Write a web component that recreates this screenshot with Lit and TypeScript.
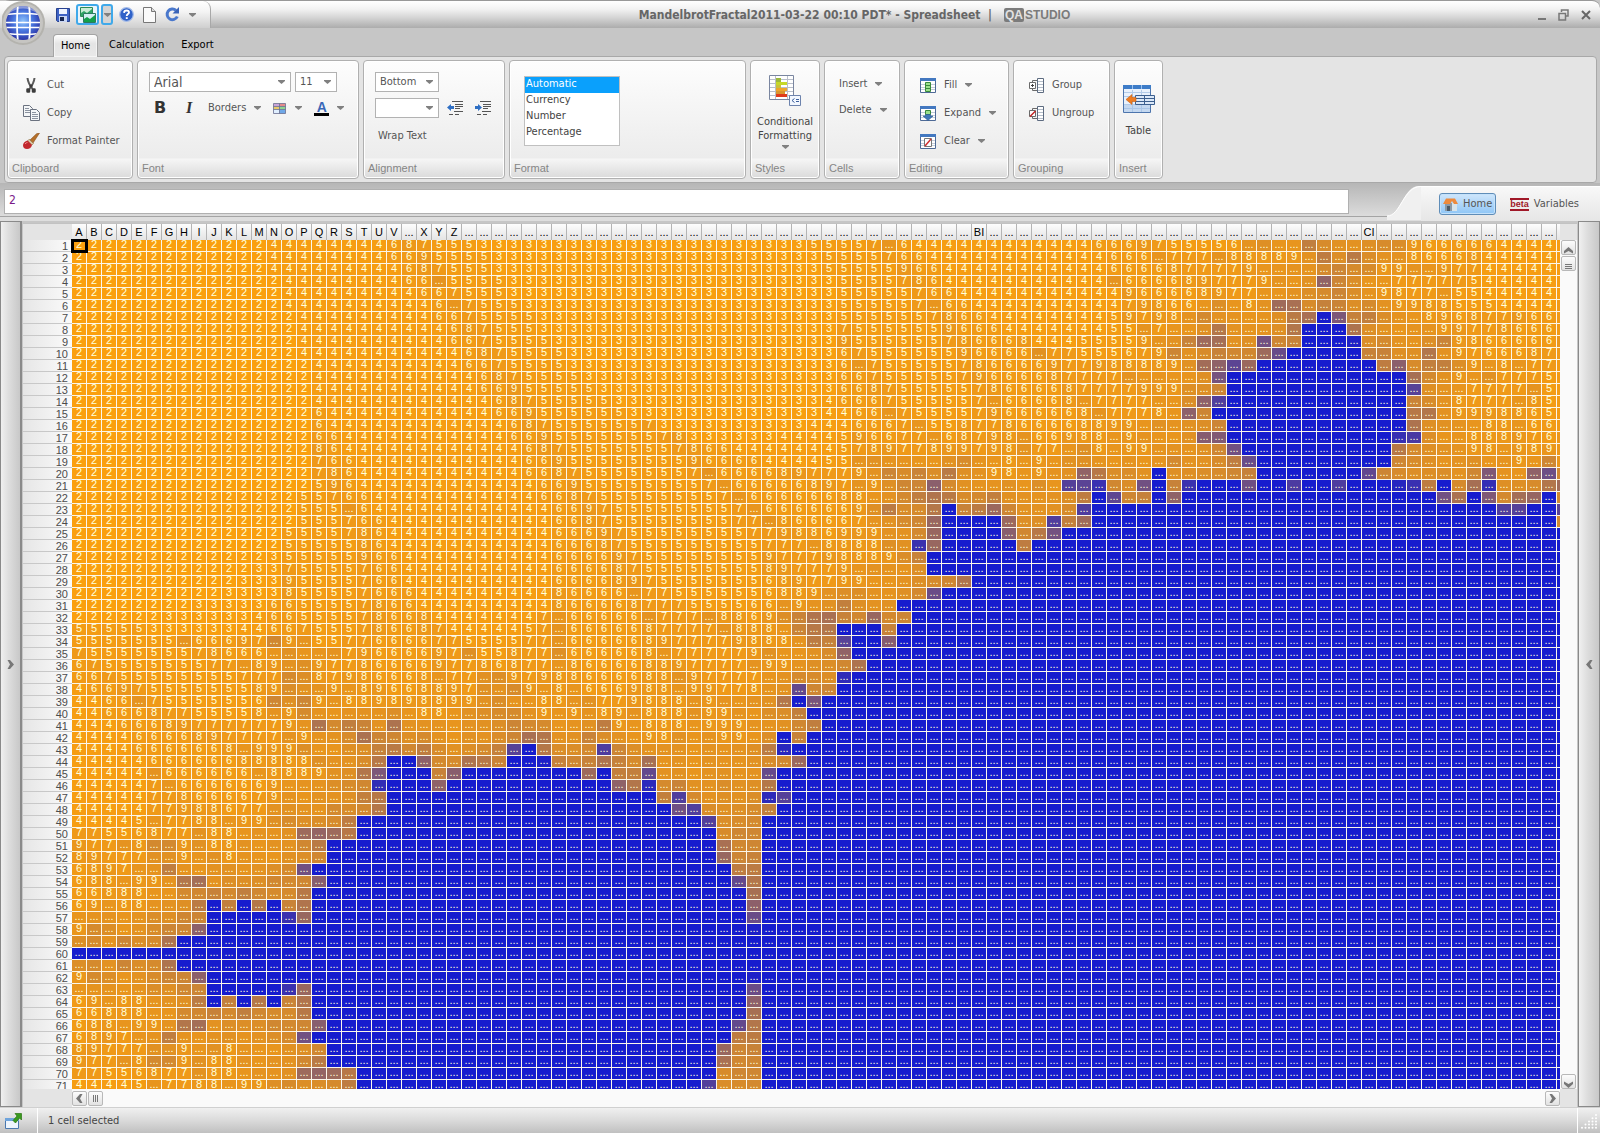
import { LitElement, html, svg, css, nothing, TemplateResult } from "lit";
import { customElement, property } from "lit/decorators.js";
import { styleMap } from "lit/directives/style-map.js";
import { classMap } from "lit/directives/class-map.js";

const COLUMNS = 100;
const ROWS = 71;
const MAX_STEPS = 100;
const STEP = 1 / 60;

/** Number of steps before the orbit of x + iy leaves the hyperbola x² - y² = 4. */
function escapeSteps(cx: number, cy: number): number {
  let x = cx;
  let y = cy;
  for (let n = 0; n < MAX_STEPS; n++) {
    const xx = x * x;
    const yy = y * y;
    if (!(xx - yy <= 4)) return n;
    y = 2 * x * y + cy;
    x = xx - yy + cx;
  }
  return MAX_STEPS;
}

const FEW: number[] = [255, 162, 10];
const MANY: number[] = [22, 28, 206];

function heat(n: number): string {
  const t = n / MAX_STEPS;
  return `rgb(${FEW.map((v, i) => Math.round(v + (MANY[i] - v) * t)).join(",")})`;
}

function columnName(i: number): string {
  const letter = String.fromCharCode(65 + (i % 26));
  return i < 26 ? letter : columnName(Math.floor(i / 26) - 1) + letter;
}

function columnLabel(i: number): string {
  const name = columnName(i);
  if (i === COLUMNS - 1) return "";
  if (name === "BI" || name === "CI") return name;
  return name.length === 1 && name !== "W" ? name : "...";
}

function cellText(n: number, column: number): string {
  if (column === COLUMNS - 1) return "";
  return n < 10 ? String(n) : "...";
}

const icon = (w: number, h: number, body: unknown) =>
  html`<svg width=${w} height=${h} viewBox="0 0 ${w} ${h}" aria-hidden="true">${body}</svg>`;

const caret = icon(7, 4, svg`<path d="M0 0h7v1L3.5 4 0 1z" fill="#808080"/>`);

const icons = {
  orb: icon(44, 46, svg`
    <defs>
      <radialGradient id="ball" cx=".5" cy=".45" r=".55">
        <stop offset="0" stop-color="#8fc4fb"/><stop offset=".5" stop-color="#4a78e0"/><stop offset="1" stop-color="#2c36a8"/>
      </radialGradient>
      <clipPath id="ballclip"><circle cx="21" cy="23" r="17"/></clipPath>
    </defs>
    <circle cx="21" cy="23" r="22" fill="#b4b3ae"/>
    <circle cx="21" cy="23" r="20" fill="#c6c5c2"/>
    <circle cx="21" cy="23" r="17" fill="url(#ball)"/>
    <g clip-path="url(#ballclip)" fill="none" stroke="#fff">
      <path d="M16 4q-2 19 0 38M27 4q2 19 0 38" stroke-width="1.8"/>
      <path d="M3 14.500q18-2 36 0M3 22.500h36M3 27.500h36M3 33.500q18 2 36 0" stroke-width="1.500"/>
      <path d="M6 12q15-10 30 0" stroke="#ffffff66" stroke-width="3"/>
    </g>`),
  save: icon(14, 14, svg`
    <path d="M.5 .5h13v13h-12l-1-1z" fill="#3e62c4" stroke="#27418f"/>
    <path d="M3 1h8v5H3z" fill="#eef3ff"/><path d="M3 8h8v6H3z" fill="#c9d6f4"/><path d="M4 9h4v4H4z" fill="#15244f"/>`),
  pictures: icon(16, 16, svg`
    <path d="M.5 .5h12v9H.5z" fill="#c9ecd6" stroke="#2c8a55"/><path d="M1 9V6l3-2 3 2 5-4v7z" fill="#2ea565"/>
    <path d="M3.500 6.500h12v9h-12z" fill="#d3eef3" stroke="#2c7a60"/><path d="M4 15v-3l3-2 3 2 5-4v7z" fill="#12a04a"/>`),
  help: icon(15, 15, svg`
    <circle cx="7.500" cy="7.500" r="6.800" fill="#2f62c8" stroke="#a5bce8" stroke-width="1.200"/>
    <path d="M5 5.800Q5.200 3.500 7.600 3.500T10 5.500C10 7 7.700 7.200 7.700 9" fill="none" stroke="#fff" stroke-width="1.800"/><path d="M6.800 10.200h1.900V12H6.800z" fill="#fff"/>`),
  page: icon(13, 16, svg`<path d="M.5 .5h8l4 4v11H.5z" fill="#fafafa" stroke="#777"/><path d="M8.500 .5v4h4" fill="#ddd" stroke="#777"/>`),
  refresh: icon(15, 15, svg`
    <path d="M12.300 9.500A5.300 5.300 0 1 1 11 3.400" fill="none" stroke="#4a78cc" stroke-width="3"/><path d="M14 0v6.500H7.500z" fill="#3a64b8"/>`),
  cut: icon(12, 17, svg`
    <path d="M2.500 1Q3 6 7.500 12M9.500 1Q9 6 4.500 12" fill="none" stroke="#5a5a5a" stroke-width="2"/><path d="M4.500 9h3" stroke="#3c3c3c" stroke-width="3"/>
    <path d="M2.500 12.500h1.500v2H2.500zM8 12.500h1.500v2H8z" fill="none" stroke="#3c3c3c" stroke-width="2.500" stroke-linejoin="round"/>`),
  copy: icon(17, 16, svg`
    <path d="M.5 .5h6l3 3v8h-9z" fill="#f4f6f8" stroke="#6b7280"/><path d="M2 3.500h4M2 5.500h5M2 7.500h5" stroke="#8b93a0"/>
    <path d="M7.500 4.500h6l3 3v8h-9z" fill="#f4f6f8" stroke="#6b7280"/><path d="M9 7.500h4M9 9.500h6M9 11.500h6M9 13.500h6" stroke="#8b93a0"/>`),
  brush: icon(17, 16, svg`
    <path d="M16.500 0 13.500 .8 7 7l3 3z" fill="#b5702a" stroke="#8a4f1c" stroke-width=".6"/>
    <path d="M6.200 6.200 10.500 10.500 9 12 4.700 7.800z" fill="#d9c7a4" stroke="#8b6b3f" stroke-width=".6"/>
    <path d="M4.500 7.500 9 12Q8 16 4 16T0 12Q.500 8.500 4.500 7.500z" fill="#c2282e"/><path d="M2 11q1-1.500 2.500-1.500" stroke="#f08a8a" fill="none"/>`),
  colors: icon(13, 11, svg`
    <path d="M.5 .5h6v3h-6z" fill="#c9a4d8"/><path d="M6.500 .5h6v3h-6z" fill="#e58a8a"/><path d="M.5 3.500h6v3h-6z" fill="#e8c96a"/>
    <path d="M6.500 3.500h6v3h-6z" fill="#8fd48f"/><path d="M.5 6.500h6v4h-6z" fill="#e0efff"/><path d="M6.500 6.500h6v4h-6z" fill="#6fa8e8"/>
    <path d="M.5 .5h12v10H.5zM6.500 .5v10M.5 3.500h12M.5 6.500h12" fill="none" stroke="#6a6f90" stroke-opacity=".8"/>`),
  outdent: icon(16, 14, svg`
    <path d="M5 .5h11M8 3.500h8M8 5.500h8M8 7.500h5M7 10.500h9" stroke="#555"/><path d="M2 13.500h4M8 13.500h4" stroke="#555"/><path d="M0 6.500 4 3v2h3v3H4v2z" fill="#2f6fc4"/>`),
  indent: icon(16, 14, svg`
    <path d="M5 .5h11M8 3.500h8M8 5.500h8M8 7.500h5M7 10.500h9" stroke="#555"/><path d="M2 13.500h4M8 13.500h4" stroke="#555"/><path d="M7 6.500 3 3v2H0v3h3v2z" fill="#2f6fc4"/>`),
  conditional: icon(33, 32, svg`
    <path d="M.5 .5h24v24H.5z" fill="#fff" stroke="#7a86a0"/>
    <path d="M1 4.500h23M1 8.500h23M1 12.500h23M1 16.500h23M1 20.500h23M6.500 1v23M18.500 1v23" stroke="#b9bfca"/>
    <path d="M7 3h5v4H7z" fill="#9cb83c"/><path d="M7 7h11v3H7z" fill="#c6d829"/><path d="M7 10h5v3H7z" fill="#c8c23c"/>
    <path d="M7 13h11v3H7z" fill="#eea52c"/><path d="M7 16h9v3H7z" fill="#d9962f"/><path d="M7 19h11v3H7z" fill="#e03c1c"/>
    <path d="M20.500 20.500h11v10h-11z" fill="#f2f7ff" stroke="#6d83ad"/>
    <path d="M25.500 23.500 23 25.500l2.500 2M27 24.500h3M27 26.500h3" fill="none" stroke="#3c5f9c"/>`),
  fill: icon(16, 15, svg`
    <path d="M.5 .5h15v14H.5z" fill="#fff" stroke="#4e6a96"/><path d="M0 0h16v3H0z" fill="#4378c0"/><path d="M1 6.500h14M1 9.500h14M1 11.500h14" stroke="#c3ccd8"/>
    <path d="M5.500 4.500h5v9h-5z" fill="#9be08c" stroke="#3a8a3c"/><path d="M6 7.500h4M6 10.500h4" stroke="#3a8a3c"/>`),
  expand: icon(16, 15, svg`
    <path d="M.5 .5h15v14H.5z" fill="#fff" stroke="#4e6a96"/><path d="M0 0h16v3H0z" fill="#4378c0"/><path d="M1 6.500h14M1 9.500h14M1 11.500h14" stroke="#c3ccd8"/>
    <path d="M5.500 4.500h5v4h-5z" fill="#9be08c" stroke="#3a8a3c"/><path d="M5.500 8.500h5v1.500h2.500l-5 4.500-5-4.500h2.500z" fill="#3f78b8" stroke="#2d5b90" stroke-width=".6"/>`),
  clear: icon(16, 15, svg`
    <path d="M.5 .5h15v14H.5z" fill="#fff" stroke="#4e6a96"/><path d="M0 0h16v3H0z" fill="#4378c0"/><path d="M1 6.500h14M1 9.500h14M1 11.500h14" stroke="#c3ccd8"/>
    <path d="M4.500 4.500h7v8h-7z" fill="#fff" stroke="#777"/><path d="M5 12 11 5" stroke="#d03030" stroke-width="1.500"/>`),
  group: icon(15, 15, svg`
    <path d="M8.500 .5h6v14h-6z" fill="#fff" stroke="#5d6b80"/><path d="M9 3.500h5M9 6.500h5M9 9.500h5M9 12.500h5" stroke="#b4bdc9"/>
    <path d="M8 2.500H3.500v10H8" fill="none" stroke="#6a6a6a"/><path d="M.5 4.500h6v6h-6z" fill="#fff" stroke="#6a6a6a"/><path d="M2 7.500h3M3.500 6v3" stroke="#444"/>`),
  ungroup: icon(15, 15, svg`
    <path d="M8.500 .5h6v14h-6z" fill="#fff" stroke="#5d6b80"/><path d="M9 3.500h5M9 6.500h5M9 9.500h5M9 12.500h5" stroke="#b4bdc9"/>
    <path d="M8 2.500H3.500v10H8" fill="none" stroke="#6a6a6a"/><path d="M.5 4.500h6v6h-6z" fill="#fff" stroke="#6a6a6a"/><path d="M1 10.500 6.500 5" stroke="#c02020" stroke-width="1.500"/>`),
  table: icon(32, 29, svg`
    <path d="M.5 .5h27v27H.5z" fill="#e9f1fb" stroke="#4d75ad"/><path d="M0 0h28v4H0z" fill="#3d7cc8"/><path d="M9.500 0v4M18.500 0v4" stroke="#9cc2ef"/>
    <path d="M1 7.500h26M1 11.500h26M1 19.500h26M1 23.500h26M9.500 5v22M18.500 5v22" stroke="#b3cbe8"/><path d="M1 20h26v7H1z" fill="#9fbfe6" fill-opacity=".5"/>
    <path d="M12.500 10.500h19v9h-19z" fill="#dbe8f8" stroke="#3c5f8e"/><path d="M12.500 13.500h19M12.500 16.500h19M21.500 10.500v9" stroke="#3c5f8e"/>
    <path d="M3 14.500 9 9.500v3h4v4H9v3z" fill="#ee7d22" stroke="#c85f10" stroke-width=".6"/>`),
  home: icon(15, 13, svg`
    <path d="M2 5h8v8H2z" fill="#8b99a6"/><path d="M9 5h5v8H9z" fill="#d8e4ea"/><path d="M4 8h3v5H4z" fill="#4c5a66"/>
    <path d="M0 6 3 .5h9L15 6h-4L9 3 7 6z" fill="#ee8a3c"/>`),
  launch: icon(17, 16, svg`
    <path d="M.5 5.500h13v10H.5z" fill="#eef5fd" stroke="#4a78ae"/><path d="M0 5h14v3H0z" fill="#6fa4dc"/>
    <path d="M10 .5h6.500V7l-2-2-4 5-2.500-2.500 4-4.500z" fill="#3a9a1e" stroke="#2a7412" stroke-width=".7"/>`),
  minimize: icon(8, 2, svg`<path d="M0 0h8v2H0z" fill="#777"/>`),
  restore: icon(11, 12, svg`<path d="M3.500 3V1H10v6H8" fill="none" stroke="#777" stroke-width="1.500"/><path d="M1 4.500h6.500V11H1z" fill="none" stroke="#777" stroke-width="1.500"/>`),
  close: icon(10, 10, svg`<path d="M1 1l8 8M9 1 1 9" stroke="#666" stroke-width="2"/>`),
  left: icon(7, 9, svg`<path d="M6.500 0 4 4.500 6.500 9H4L0 4.500 4 0z" fill="#777"/>`),
  right: icon(7, 9, svg`<path d="M.5 0 3 4.500.5 9H3l4-4.500L3 0z" fill="#777"/>`),
  up: icon(9, 7, svg`<path d="M0 6.500 4.500 4 9 6.500V4L4.500 0 0 4z" fill="#777"/>`),
  down: icon(9, 7, svg`<path d="M0 .5 4.500 3 9 .5V3L4.500 7 0 3z" fill="#777"/>`),
  gripH: icon(7, 7, svg`<path d="M1.500 0v7M3.500 0v7M5.500 0v7" stroke="#777"/>`),
  gripV: icon(7, 7, svg`<path d="M0 1.500h7M0 3.500h7M0 5.500h7" stroke="#777"/>`),
  resize: icon(17, 17, svg`${[0, 1, 2, 3, 4].map((r) =>
    Array.from({ length: r + 1 }, (_, c) => svg`<circle cx=${15 - c * 3.5} cy=${2 + r * 3.2} r="1" fill="#fff"/>`))}`),
};

const controls = css`
  button, select, input { font: inherit; color: inherit; margin: 0; padding: 0; border: 0; background: none; border-radius: 0; }
  button { display: inline-flex; align-items: center; white-space: nowrap; }
  svg { display: block; flex: none; }
`;

@customElement("ribbon-group")
class RibbonGroup extends LitElement {
  @property() label = "";
  static styles = css`
    :host { display: flex; flex-direction: column; box-sizing: border-box; border: 1px solid #b0b0b0; border-radius: 4px;
      background: linear-gradient(#fdfdfd, #ececec 97px, #f6f6f6 98px, #dadada); box-shadow: inset 0 0 0 1px #fff; }
    .content { flex: 1; box-sizing: border-box; }
    .label { height: 20px; line-height: 21px; padding-left: 4px; color: #858585; font-family: "Liberation Sans", sans-serif; }
  `;
  render() {
    return html`<div class="content"><slot></slot></div><div class="label">${this.label}</div>`;
  }
}

@customElement("fractal-sheet")
class FractalSheet extends LitElement {
  static styles = css`
    :host { display: block; overflow: hidden; font: 11px/8px "Liberation Sans", sans-serif; }
    table { border-collapse: separate; border-spacing: 0; table-layout: fixed; width: 1549px; }
    .numbers { width: 49px; }
    th, td { box-sizing: border-box; padding: 0; font-weight: normal; white-space: nowrap; }
    thead th { height: 16px; line-height: 15px; color: #000; text-align: center; border-right: 1px solid #b4b4b4;
      background: linear-gradient(#fdfdfd, #e4e4e4); }
    thead th:first-child { background: #e4e4e4; border-right: 0; }
    tbody th { height: 12px; line-height: 10px; color: #4c4c4c; text-align: right; padding-right: 4px;
      border-bottom: 1px solid #c8c8c8; background: linear-gradient(90deg, #e6e6e6, #fbfbfb); }
    td { height: 12px; text-align: center; vertical-align: top; color: #ffffdc;
      border-right: 1px solid #fbf6ea; border-bottom: 1px solid #fbf6ea; }
    .current { outline: 3px solid #000; outline-offset: -2px; position: relative; }
  `;
  render() {
    const columns = Array.from({ length: COLUMNS }, (_, i) => i);
    const rows = Array.from({ length: ROWS }, (_, i) => i);
    return html`<table aria-label="Mandelbrot cells">
      <colgroup><col class="numbers" /><col span=${COLUMNS} /></colgroup>
      <thead><tr><th></th>${columns.map((c) => html`<th scope="col">${columnLabel(c)}</th>`)}</tr></thead>
      <tbody>${rows.map((r) => html`<tr><th scope="row">${r + 1}</th>${columns.map((c) => {
        const n = escapeSteps(-1.5 + c * STEP, (59 - r) * STEP);
        return html`<td class=${classMap({ current: r === 0 && c === 0 })} style=${styleMap({ background: heat(n) })}>${cellText(n, c)}</td>`;
      })}</tr>`)}</tbody>
    </table>`;
  }
}

@customElement("app-root")
class AppRoot extends LitElement {
  static styles = [controls, css`
    :host { display: flex; flex-direction: column; height: 100vh; overflow: hidden; position: relative; background: #c6c6c6;
      font: 11px/14px "DejaVu Sans Condensed", "DejaVu Sans", sans-serif; color: #555; }
    .titlebar { display: flex; align-items: stretch; height: 28px; box-sizing: border-box; border-top: 1px solid #989898;
      background: linear-gradient(#fff, #f2f2f2 30%, #d6d6d6 60%, #acacac); border-radius: 10px 8px 0 0; }
    .quick { display: flex; align-items: center; width: 154px; padding-left: 56px; gap: 9px; box-sizing: content-box;
      border-right: 1px solid #a8a8a8; border-radius: 0 8px 0 0; background: linear-gradient(#fff, #f4f4f4 40%, #cfcfcf); }
    .split { display: flex; gap: 2px; margin: 0 -3px; }
    .split button { height: 21px; border: 2px solid #3fa9ea; border-radius: 3px; justify-content: center; box-sizing: border-box; background: #eaf4fb; }
    .split button:first-child { width: 23px; }
    .split button:last-child { width: 12px; background: #d4d4d4; }
    .caption { flex: 1; display: flex; align-items: center; justify-content: center; gap: 12px; padding-right: 40px; margin: 0;
      color: #666; font: bold 12px/16px "DejaVu Sans Condensed", "DejaVu Sans", sans-serif; }
    .brand { display: flex; align-items: center; gap: 1px; color: #7b7b7b; font: bold 12px/14px "Liberation Sans", sans-serif; }
    .brand b { background: #7b7b7b; color: #e2e2e2; padding: 0 1px; border-radius: 2px; }
    .window { display: flex; align-items: center; gap: 12px; padding-right: 9px; }
    .window .min { padding-top: 9px; }
    .orb { position: absolute; left: 2px; top: 0; z-index: 2; }
    .tabs { display: flex; align-items: flex-end; height: 28px; padding-left: 53px; gap: 17px; color: #000; }
    .tabs button { height: 23px; }
    .tabs .active { width: 45px; margin: 0 -6px -1px 0; justify-content: center; box-sizing: border-box; border: 1px solid #a4a4a4; border-bottom: 0;
      border-radius: 4px 4px 0 0; background: linear-gradient(#fff, #e4e4e4 40%, #e9e9e9); position: relative; z-index: 1; box-shadow: inset 0 0 0 1px #fff8; }
    .ribbon { display: flex; gap: 4px; height: 127px; box-sizing: border-box; margin: 0 3px 0 4px; padding: 3px 2px; border: 1px solid #a8a8a8;
      border-radius: 4px; background: #e4e4e4; }
    .clipboard { width: 126px; }
    .font { width: 222px; }
    .alignment { width: 142px; }
    .format { width: 237px; }
    .styles { width: 70px; }
    .cells { width: 76px; }
    .editing { width: 105px; }
    .grouping { width: 97px; }
    .insert { width: 49px; }
    .list { display: flex; flex-direction: column; padding: 10px 0 0 14px; }
    .list button { height: 28px; }
    .list .pic { display: flex; justify-content: center; width: 18px; margin-right: 7px; }
    .grouping .list { padding-left: 13px; }
    .drop > svg { margin-left: 8px; }
    .box { position: relative; display: flex; }
    .box select { appearance: none; width: 100%; height: 20px; box-sizing: border-box; padding: 0 4px; border: 1px solid #b2b2b2; background: #fff; }
    .box svg { position: absolute; right: 6px; top: 8px; pointer-events: none; }
    .fontname { width: 142px; font-size: 14px; }
    .fontsize { width: 42px; }
    .valign, .halign { width: 64px; }
    .stack { padding: 11px 10px 0 11px; display: flex; flex-direction: column; gap: 6px; }
    .line { display: flex; align-items: center; gap: 4px; height: 20px; }
    .tools { gap: 0; }
    .bold { width: 22px; margin-right: 7px; justify-content: center; color: #333; font: 900 16px/20px "DejaVu Sans", sans-serif; }
    .italic { width: 22px; margin-right: 8px; justify-content: center; color: #333; font: italic bold 16px/20px "Liberation Serif", serif; }
    .borders { margin-right: 12px; }
    .swatch { margin-right: 12px; }
    .swatch > svg:first-child { margin-left: 0; }
    .swatch > svg:last-child { margin-left: 9px; }
    .ink { display: flex; flex-direction: column; width: 15px; color: #3a68b8; font: bold 14px/12px "Liberation Sans", sans-serif; text-align: center; }
    .ink i { height: 3px; background: #000; }
    .dent { width: 16px; margin-left: 4px; }
    .dent + .dent { margin-left: 8px; }
    .wrap { width: 60px; height: 24px; margin: 0 0 0 3px; }
    .formats { display: block; width: 96px; height: 70px; margin: 15px 0 0 14px; overflow: hidden; border: 1px solid #c0c0c0; background: #fff; }
    .formats option { height: 16px; line-height: 16px; min-height: 16px; padding: 0 0 0 1px; box-sizing: border-box; -webkit-text-fill-color: #444; }
    .formats option:checked { background: linear-gradient(#0aa0fc, #0aa0fc); -webkit-text-fill-color: #fff; }
    .tall { flex-direction: column; width: 100%; padding-top: 14px; text-align: center; }
    .tall span { margin: 8px 0 2px; color: #444; }
    .insert .tall { padding-top: 24px; }
    .insert .tall span { margin-top: 10px; }
    .cellmenu { display: flex; flex-direction: column; align-items: flex-start; padding: 10px 0 0 14px; }
    .cellmenu button { height: 26px; }
    .formula { display: flex; height: 38px; box-sizing: border-box; padding-left: 4px; background: linear-gradient(#b6b6b6, #dcdcdc 33px, #a4a4a4 33px, #a4a4a4 34px, #dedede 34px); }
    .entry { flex: 1; height: 25px; margin-top: 6px; box-sizing: border-box; padding: 0 4px 4px; border: 1px solid #b0b0b0; background: #fff; color: #7a1a88;
      font: 12px/16px "DejaVu Sans Condensed", sans-serif; }
    .slope { margin: 3px 0 0 38px; }
    .views { display: flex; align-items: center; height: 35px; margin-top: 3px; padding: 0 21px 0 18px; gap: 14px; box-sizing: border-box; border-top: 1px solid #fff; background: linear-gradient(#f8f8f8, #e6e6e6); }
    .views button { height: 22px; gap: 5px; box-sizing: border-box; }
    .views .on { padding: 0 3px; border: 1px solid #5f8db8; border-radius: 3px; background: linear-gradient(#cfe6fb, #8fc6f6); box-shadow: inset 0 0 0 1px #c5e2fb; }
    .beta { color: #a01828; border-top: 2px solid #a01828; border-bottom: 2px solid #a01828; font: bold 9px/9px "Liberation Sans", sans-serif; }
    .body { flex: 1; display: flex; min-height: 0; }
    .handle { width: 22px; justify-content: center; box-sizing: border-box; border: 1px solid #8a8a8a; background: linear-gradient(90deg, #f0f0f0, #dedede 40%, #c8c8c8); }
    .handle:first-child { border-width: 1px 2px 1px 1px; }
    .work { flex: 1; min-width: 0; display: grid; grid-template: 1fr 18px / 1fr 17px; margin: 2px 1px 0; background: #e4e4e4; border-top: 1px solid #c2c2c2; }
    .work fractal-sheet { min-width: 0; min-height: 0; }
    .vbar { display: flex; flex-direction: column; align-items: center; gap: 1px; padding: 16px 0 0; background: linear-gradient(#e4e4e4 16px, #fafafa 16px); }
    .hbar { display: flex; align-items: center; gap: 1px; margin-left: 49px; background: #fafafa; }
    .vbar button, .hbar button { width: 15px; height: 15px; justify-content: center; box-sizing: border-box; border: 1px solid #b8b8b8; border-radius: 2px; background: linear-gradient(#fcfcfc, #e2e2e2); }
    .vbar :last-child { margin-top: auto; }
    .hbar > :last-child { margin-left: auto; }
    .status { display: flex; align-items: stretch; height: 26px; box-sizing: border-box; border-top: 1px solid #d0d0d0; background: linear-gradient(#f0f0f0, #dadada 50%, #c0c0c0); color: #444; }
    .status .open { width: 38px; padding-left: 5px; border-right: 1px solid #fff; box-sizing: border-box; }
    .status output { flex: 1; padding-left: 10px; line-height: 25px; }
    .grip { display: flex; align-items: flex-end; border-left: 1px solid #fff; padding: 0 2px 3px 3px; }
  `];

  private item(picture: TemplateResult, text: string, menu = false) {
    return html`<button class="drop"><span class="pic">${picture}</span>${text}${menu ? caret : nothing}</button>`;
  }

  private ribbon() {
    return html`
      <ribbon-group class="clipboard" label="Clipboard"><div class="list">
        ${this.item(icons.cut, "Cut")}${this.item(icons.copy, "Copy")}${this.item(icons.brush, "Format Painter")}
      </div></ribbon-group>
      <ribbon-group class="font" label="Font"><div class="stack">
        <div class="line">
          <div class="box fontname"><select aria-label="Font family"><option>Arial</option></select>${caret}</div>
          <div class="box fontsize"><select aria-label="Font size"><option>11</option></select>${caret}</div>
        </div>
        <div class="line tools">
          <button class="bold" aria-label="Bold">B</button><button class="italic" aria-label="Italic">I</button>
          <button class="drop borders">Borders${caret}</button>
          <button class="drop swatch" aria-label="Cell color">${icons.colors}${caret}</button>
          <button class="drop" aria-label="Text color"><span class="ink">A<i></i></span>${caret}</button>
        </div>
      </div></ribbon-group>
      <ribbon-group class="alignment" label="Alignment"><div class="stack">
        <div class="line"><div class="box valign"><select aria-label="Vertical alignment"><option>Bottom</option></select>${caret}</div></div>
        <div class="line">
          <div class="box halign"><select aria-label="Horizontal alignment"><option></option></select>${caret}</div>
          <button class="dent" aria-label="Decrease indent">${icons.outdent}</button><button class="dent" aria-label="Increase indent">${icons.indent}</button>
        </div>
        <button class="wrap">Wrap Text</button>
      </div></ribbon-group>
      <ribbon-group class="format" label="Format">
        <select class="formats" size="4" aria-label="Number format">
          <option selected>Automatic</option><option>Currency</option><option>Number</option><option>Percentage</option>
        </select>
      </ribbon-group>
      <ribbon-group class="styles" label="Styles"><button class="tall">${icons.conditional}<span>Conditional<br />Formatting</span>${caret}</button></ribbon-group>
      <ribbon-group class="cells" label="Cells"><div class="cellmenu">
        <button class="drop">Insert${caret}</button><button class="drop">Delete${caret}</button>
      </div></ribbon-group>
      <ribbon-group class="editing" label="Editing"><div class="list">
        ${this.item(icons.fill, "Fill", true)}${this.item(icons.expand, "Expand", true)}${this.item(icons.clear, "Clear", true)}
      </div></ribbon-group>
      <ribbon-group class="grouping" label="Grouping"><div class="list">
        ${this.item(icons.group, "Group")}${this.item(icons.ungroup, "Ungroup")}
      </div></ribbon-group>
      <ribbon-group class="insert" label="Insert"><button class="tall">${icons.table}<span>Table</span></button></ribbon-group>`;
  }

  render() {
    return html`
      <header class="titlebar">
        <div class="quick">
          <button aria-label="Save">${icons.save}</button>
          <div class="split"><button aria-label="Pictures">${icons.pictures}</button><button aria-label="Picture options">${caret}</button></div>
          <button aria-label="Help">${icons.help}</button>
          <button aria-label="New page">${icons.page}</button>
          <button aria-label="Refresh">${icons.refresh}</button>
          <button aria-label="More">${caret}</button>
        </div>
        <h1 class="caption">MandelbrotFractal2011-03-22 00:10 PDT* - Spreadsheet&nbsp; |<span class="brand"><b>QA</b>STUDIO</span></h1>
        <div class="window">
          <button class="min" aria-label="Minimize">${icons.minimize}</button>
          <button aria-label="Restore">${icons.restore}</button>
          <button aria-label="Close">${icons.close}</button>
        </div>
      </header>
      <button class="orb" aria-label="Application menu">${icons.orb}</button>
      <nav class="tabs"><button class="active">Home</button><button>Calculation</button><button>Export</button></nav>
      <section class="ribbon">${this.ribbon()}</section>
      <div class="formula">
        <input class="entry" aria-label="Formula" .value=${"2"} />
        <svg class="slope" width="34" height="34" viewBox="0 0 34 34"><path d="M0 30C14 30 16 0 32 0h2v34H0z" fill="#f0f0f0"/><path d="M0 30C14 30 16 .5 34 .5" fill="none" stroke="#fff"/></svg>
        <div class="views">
          <button class="on">${icons.home}Home</button>
          <button><span class="beta">beta</span>Variables</button>
        </div>
      </div>
      <main class="body">
        <button class="handle" aria-label="Open left panel">${icons.right}</button>
        <div class="work">
          <fractal-sheet></fractal-sheet>
          <div class="vbar">
            <button aria-label="Scroll up">${icons.up}</button><button aria-label="Vertical position">${icons.gripV}</button><button aria-label="Scroll down">${icons.down}</button>
          </div>
          <div class="hbar">
            <button aria-label="Scroll left">${icons.left}</button><button aria-label="Horizontal position">${icons.gripH}</button><button aria-label="Scroll right">${icons.right}</button>
          </div>
        </div>
        <button class="handle" aria-label="Open right panel">${icons.left}</button>
      </main>
      <footer class="status">
        <button class="open" aria-label="Detach window">${icons.launch}</button>
        <output>1 cell selected</output>
        <div class="grip">${icons.resize}</div>
      </footer>`;
  }
}
